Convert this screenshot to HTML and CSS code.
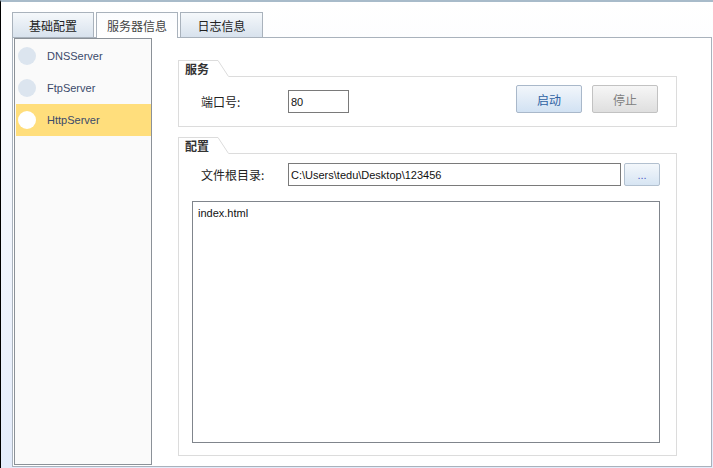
FILE: index.html
```html
<!DOCTYPE html>
<html>
<head>
<meta charset="utf-8">
<link rel="stylesheet" href="styles.css">
</head>
<body>
<div class="window">
  <div class="tabs">
    <div class="tab w1">基础配置</div>
    <div class="tab w2 active">服务器信息</div>
    <div class="tab w3">日志信息</div>
  </div>
  <div class="panel">
    <div class="list">
      <div class="item"><span class="dot"></span><span>DNSServer</span></div>
      <div class="item"><span class="dot"></span><span>FtpServer</span></div>
      <div class="item sel"><span class="dot"></span><span>HttpServer</span></div>
    </div>
    <div class="content">
      <section class="group">
        <div class="gh"><span class="gh-text">服务</span><svg class="gh-slant" width="11" height="17" viewBox="0 0 11 17"><polygon points="0,0 11,17 0,17" fill="#fff"/><line x1="0" y1="0.5" x2="10.5" y2="16.5" stroke="#dcdcdc" stroke-width="1"/></svg></div>
        <div class="gb svc">
          <span class="label">端口号:</span>
          <div class="input port">80</div>
          <div class="spacer"></div>
          <button class="btn start">启动</button>
          <button class="btn stop">停止</button>
        </div>
      </section>
      <section class="group g2">
        <div class="gh"><span class="gh-text">配置</span><svg class="gh-slant" width="11" height="17" viewBox="0 0 11 17"><polygon points="0,0 11,17 0,17" fill="#fff"/><line x1="0" y1="0.5" x2="10.5" y2="16.5" stroke="#dcdcdc" stroke-width="1"/></svg></div>
        <div class="gb cfg">
          <div class="cfg-row">
            <span class="label">文件根目录:</span>
            <div class="input path">C:\Users\tedu\Desktop\123456</div>
            <button class="btn browse">...</button>
          </div>
          <div class="area">index.html</div>
        </div>
      </section>
    </div>
  </div>
</div>
</body>
</html>
```
FILE: styles.css
```css
* { box-sizing: border-box; }
html, body { margin: 0; padding: 0; }
body {
  width: 713px;
  height: 468px;
  overflow: hidden;
  font-family: "Liberation Sans", "Noto Sans CJK SC", sans-serif;
  font-size: 12px;
  color: #222;
}
.window {
  height: 468px;
  border-top: 2px solid #a8bbca;
  border-left: 1px solid #000;
  background: linear-gradient(#ffffff, #e4ecfb);
  padding: 10px 1px 1px 11px;
  display: flex;
  flex-direction: column;
}
.tabs {
  display: flex;
  align-items: flex-start;
  gap: 2px;
  height: 26px;
  margin-bottom: -1px;
  position: relative;
  z-index: 1;
}
.tab {
  height: 25px;
  border: 1px solid #a9b2bc;
  border-bottom: none;
  background: linear-gradient(#f5f8fb, #d8e2ed);
  display: flex;
  align-items: center;
  justify-content: center;
  font-family: "Noto Sans CJK SC", sans-serif;
  font-size: 12px;
  color: #222;
}
.w1 { width: 82px; }
.w2 { width: 82px; }
.w3 { width: 83px; }
.tab.active {
  height: 26px;
  background: linear-gradient(#fbfcfe, #ffffff);
  color: #444;
}
.panel {
  height: 430px;
  border: 1px solid #a9b2bc;
  background: #fff;
  display: flex;
  padding: 0 1px 1px 1px;
}
.list {
  width: 138px;
  border: 1px solid #8b9198;
  background: #fafafa;
  padding: 1px 0 1px 1px;
}
.item {
  height: 32px;
  display: flex;
  align-items: center;
  padding-left: 2px;
  gap: 11px;
  font-size: 11px;
  color: #3b4a6b;
}
.dot {
  width: 18px;
  height: 18px;
  border-radius: 50%;
  background: #dce5ef;
}
.item.sel { background: #ffde7c; }
.item.sel .dot { background: #fff; }
.content {
  padding: 22px 0 0 26px;
}
.group { width: 499px; }
.g2 { margin-top: 10px; }
.gh {
  display: flex;
  height: 17px;
  margin-bottom: -1px;
  position: relative;
  z-index: 1;
}
.gh-text {
  width: 40px;
  border-left: 1px solid #dcdcdc;
  border-top: 1px solid #dcdcdc;
  background: #fff;
  padding-left: 6px;
  line-height: 16px;
  font-family: "Noto Sans CJK SC", sans-serif;
  font-weight: bold;
  font-size: 12px;
  color: #333;
}
.gh-slant { display: block; }
.gb { border: 1px solid #dcdcdc; }
.svc {
  display: flex;
  align-items: flex-end;
  padding: 8px 18px 13px 22px;
}
.label {
  width: 87px;
  line-height: 23px;
  font-family: "Noto Sans CJK SC", sans-serif;
  font-size: 12px;
  color: #222;
}
.input {
  height: 23px;
  border: 1px solid #7a7a7a;
  background: #fff;
  display: flex;
  align-items: center;
  padding-left: 2px;
  font-size: 11px;
  color: #111;
}
.port { width: 61px; }
.spacer { flex: 1; }
.btn {
  margin: 0;
  padding: 0;
  height: 28px;
  width: 66px;
  border-radius: 2px;
  font-family: "Noto Sans CJK SC", sans-serif;
  font-size: 12px;
}
.start {
  border: 1px solid #a9b8ca;
  background: linear-gradient(#f2f6fb, #d2e2f3);
  color: #2f62a3;
}
.stop {
  margin-left: 10px;
  border: 1px solid #c2c2c2;
  background: linear-gradient(#f6f6f6, #dfdfdf);
  color: #808080;
}
.cfg {
  height: 303px;
  padding: 9px 16px 12px 13px;
}
.cfg-row {
  display: flex;
  align-items: center;
  padding-left: 9px;
}
.path { flex: 1; }
.browse {
  width: 36px;
  height: 23px;
  margin-left: 3px;
  border: 1px solid #b2c0cf;
  background: linear-gradient(#f3f7fb, #d7e5f3);
  color: #4a5ec4;
  font-family: "Liberation Sans", sans-serif;
  font-size: 11px;
  line-height: 23px;
}
.area {
  margin-top: 15px;
  height: 242px;
  border: 1px solid #80858c;
  padding: 4px 5px;
  font-size: 11px;
  line-height: 14px;
  color: #111;
}
```
